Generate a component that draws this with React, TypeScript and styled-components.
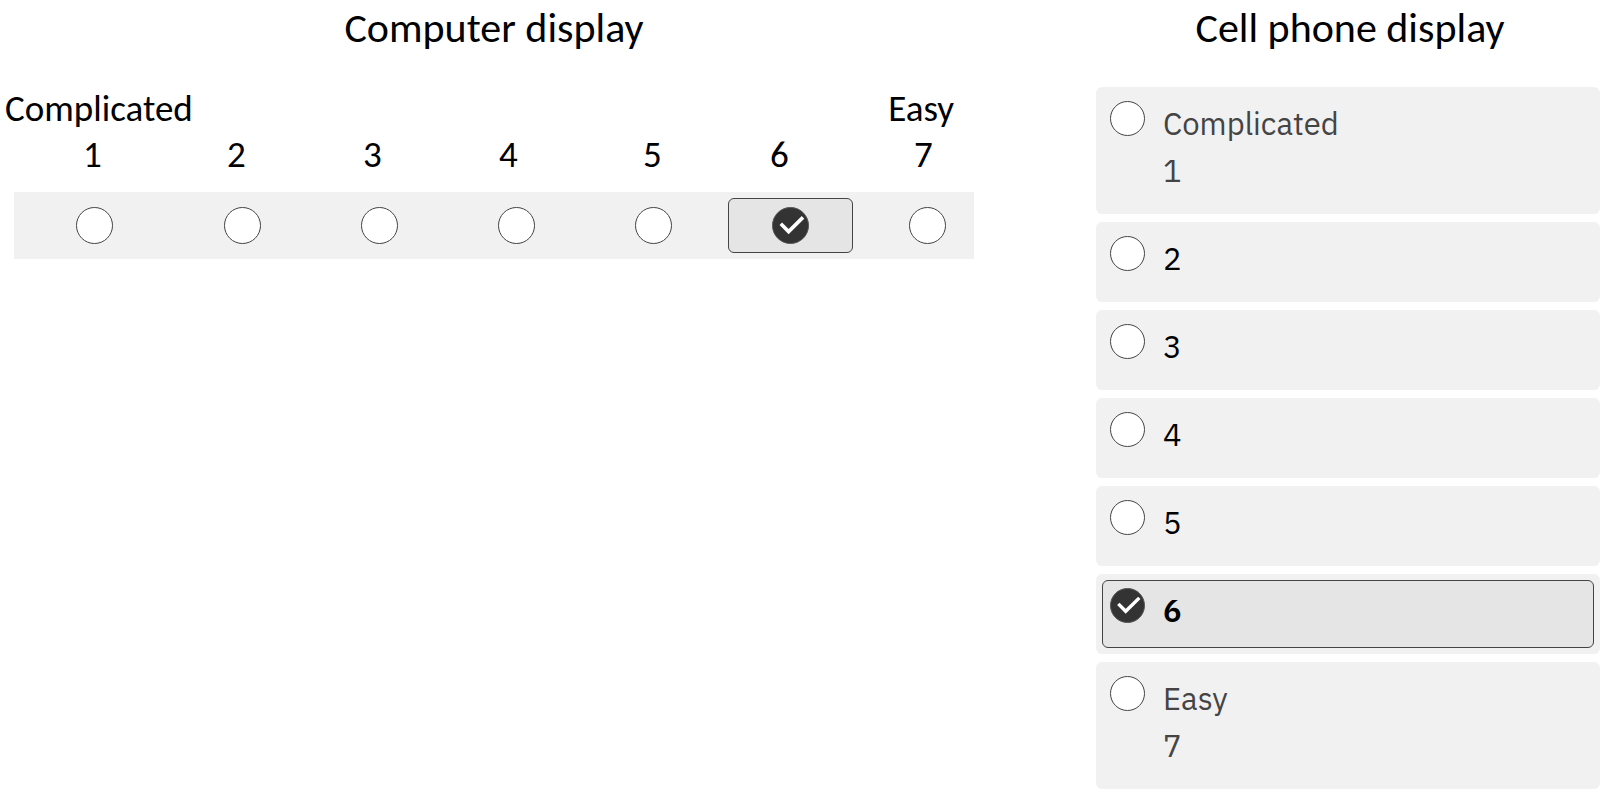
import React, { useState } from "react";
import styled, { createGlobalStyle, css } from "styled-components";

const GlobalStyle = createGlobalStyle`
  *, *::before, *::after { box-sizing: border-box; }
  body {
    margin: 0;
    background: #ffffff;
    color: #000000;
    font-family: Carlito, Calibri, Lato, "Liberation Sans", sans-serif;
  }
`;

const Page = styled.main`
  display: grid;
  grid-template-columns: minmax(0, 974fr) minmax(0, 504fr);
  column-gap: 122px;
  align-items: start;
  padding: 2px 8px 0 0;
`;

const Panel = styled.section`
  display: flex;
  flex-direction: column;
`;

const Title = styled.h2<{ $indent?: boolean }>`
  margin: 0;
  padding-left: ${({ $indent }) => ($indent ? "14px" : "4px")};
  font-size: 42px;
  line-height: 52px;
  font-weight: 400;
  text-align: center;
`;

const Anchors = styled.div`
  display: flex;
  justify-content: space-between;
  margin-top: 32px;
  padding: 0 20px 0 5px;
  font-size: 37px;
  line-height: 46px;
`;

const Digits = styled.div`
  display: grid;
  grid-template-columns: 83fr 144fr 136fr 136fr 144fr 127fr 144fr 60fr;
  font-size: 37px;
  line-height: 46px;
`;

const Digit = styled.label`
  cursor: pointer;

  &:first-child {
    grid-column-start: 2;
  }
`;

const Strip = styled.div`
  display: grid;
  grid-template-columns: 160fr repeat(5, 137fr) 115fr;
  height: 67px;
  margin: 14px 0 0 14px;
  background: #f1f1f1;
`;

const selectedBox = css`
  background: #e5e5e5;
  border-color: #444444;
`;

const Cell = styled.div<{ $selected: boolean }>`
  display: flex;
  align-items: center;
  justify-content: center;
  margin: 6px;
  border: 1px solid transparent;
  border-radius: 6px;
  ${({ $selected }) => $selected && selectedBox}

  &:last-child {
    padding-left: 22px;
  }
`;

const Cards = styled.div`
  display: flex;
  flex-direction: column;
  gap: 8px;
  margin-top: 33px;
`;

const Card = styled.label`
  display: block;
  padding: 6px;
  border-radius: 6px;
  background: #f1f1f1;
  cursor: pointer;
`;

const RadioBox = styled.span<{ $size: number }>`
  display: grid;
  flex: none;
  width: ${({ $size }) => $size}px;
  height: ${({ $size }) => $size}px;
`;

const CardBody = styled.span<{ $selected: boolean }>`
  display: flex;
  align-items: flex-start;
  gap: 18px;
  padding: 6px 7px 13px;
  border: 1px solid transparent;
  border-radius: 6px;
  ${({ $selected }) => $selected && selectedBox}

  ${RadioBox} {
    margin-top: 1px;
  }
`;

const CardText = styled.span<{ $muted: boolean; $bold: boolean }>`
  display: flex;
  flex-direction: column;
  font-family: "IBM Plex Sans", Roboto, "Liberation Sans", sans-serif;
  font-size: 31px;
  line-height: 47px;
  font-weight: ${({ $bold }) => ($bold ? 600 : 400)};
  color: ${({ $muted }) => ($muted ? "#444444" : "#000000")};
`;

const RadioInput = styled.input`
  grid-area: 1 / 1;
  appearance: none;
  width: 100%;
  height: 100%;
  margin: 0;
  border: 1px solid #444444;
  border-radius: 50%;
  background: #ffffff;
  cursor: pointer;

  &:checked {
    background: #333333;
    border-color: #555555;
  }
`;

const Check = styled.svg`
  grid-area: 1 / 1;
  width: 100%;
  height: 100%;
  visibility: hidden;
  pointer-events: none;

  ${RadioInput}:checked + & {
    visibility: visible;
  }
`;

type RadioProps = {
  id?: string;
  name: string;
  size: number;
  checked: boolean;
  onSelect: () => void;
};

const Radio = ({ id, name, size, checked, onSelect }: RadioProps) => (
  <RadioBox $size={size}>
    <RadioInput id={id} type="radio" name={name} checked={checked} onChange={onSelect} />
    <Check viewBox="0 0 37 37" aria-hidden="true">
      <path d="M8.8 16.8 L16.6 24.6 L31 10.4" fill="none" stroke="#ffffff" strokeWidth="3.6" />
    </Check>
  </RadioBox>
);

const options = [
  { value: 1, anchor: "Complicated" },
  { value: 2 },
  { value: 3 },
  { value: 4 },
  { value: 5 },
  { value: 6 },
  { value: 7, anchor: "Easy" },
];

export default function App() {
  const [wide, setWide] = useState(6);
  const [narrow, setNarrow] = useState(6);

  return (
    <>
      <GlobalStyle />
      <Page>
        <Panel>
          <Title $indent id="computer-title">Computer display</Title>
          <Anchors>
            <span>Complicated</span>
            <span>Easy</span>
          </Anchors>
          <Digits>
            {options.map(({ value }) => (
              <Digit key={value} htmlFor={`computer-${value}`}>{value}</Digit>
            ))}
          </Digits>
          <Strip role="radiogroup" aria-labelledby="computer-title">
            {options.map(({ value }) => (
              <Cell key={value} $selected={wide === value}>
                <Radio
                  id={`computer-${value}`}
                  name="computer"
                  size={37}
                  checked={wide === value}
                  onSelect={() => setWide(value)}
                />
              </Cell>
            ))}
          </Strip>
        </Panel>
        <Panel>
          <Title id="phone-title">Cell phone display</Title>
          <Cards role="radiogroup" aria-labelledby="phone-title">
            {options.map(({ value, anchor }) => (
              <Card key={value}>
                <CardBody $selected={narrow === value}>
                  <Radio
                    name="phone"
                    size={35}
                    checked={narrow === value}
                    onSelect={() => setNarrow(value)}
                  />
                  <CardText $muted={Boolean(anchor)} $bold={narrow === value}>
                    {anchor && <span>{anchor}</span>}
                    <span>{value}</span>
                  </CardText>
                </CardBody>
              </Card>
            ))}
          </Cards>
        </Panel>
      </Page>
    </>
  );
}
